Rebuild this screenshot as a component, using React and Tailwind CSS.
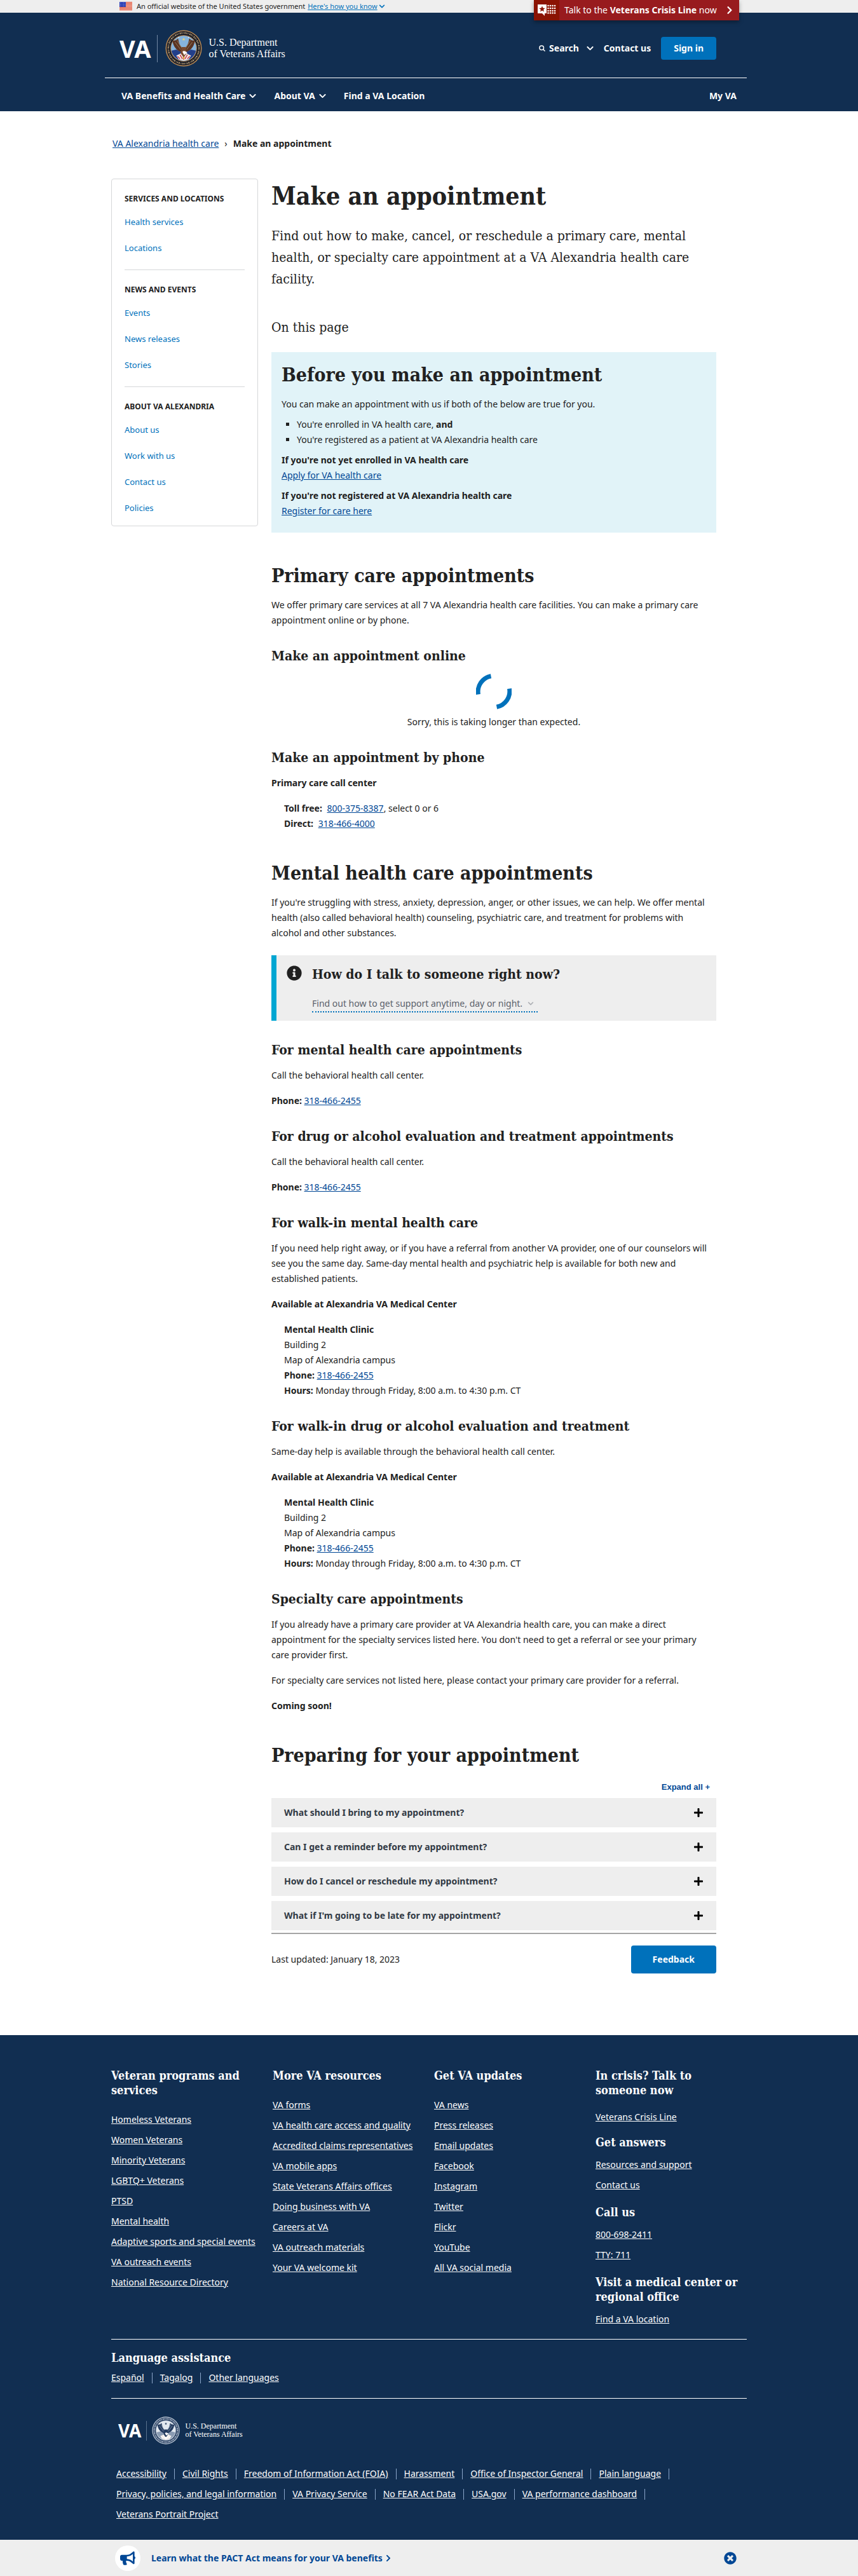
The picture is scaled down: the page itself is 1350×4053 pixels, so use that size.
import React from "react";
import {
  FaBullhorn,
  FaChevronDown,
  FaChevronRight,
  FaInfoCircle,
  FaPlus,
  FaTimesCircle,
} from "react-icons/fa";

const serif = "font-['DejaVu_Serif_Condensed','DejaVu_Serif',serif]";

const sideNav = [
  { title: "Services and locations", links: ["Health services", "Locations"] },
  { title: "News and events", links: ["Events", "News releases", "Stories"] },
  { title: "About VA Alexandria", links: ["About us", "Work with us", "Contact us", "Policies"] },
];

const questions = [
  "What should I bring to my appointment?",
  "Can I get a reminder before my appointment?",
  "How do I cancel or reschedule my appointment?",
  "What if I'm going to be late for my appointment?",
];

const footerColumns = [
  {
    title: "Veteran programs and services",
    links: [
      "Homeless Veterans",
      "Women Veterans",
      "Minority Veterans",
      "LGBTQ+ Veterans",
      "PTSD",
      "Mental health",
      "Adaptive sports and special events",
      "VA outreach events",
      "National Resource Directory",
    ],
  },
  {
    title: "More VA resources",
    links: [
      "VA forms",
      "VA health care access and quality",
      "Accredited claims representatives",
      "VA mobile apps",
      "State Veterans Affairs offices",
      "Doing business with VA",
      "Careers at VA",
      "VA outreach materials",
      "Your VA welcome kit",
    ],
  },
  {
    title: "Get VA updates",
    links: [
      "VA news",
      "Press releases",
      "Email updates",
      "Facebook",
      "Instagram",
      "Twitter",
      "Flickr",
      "YouTube",
      "All VA social media",
    ],
  },
];

const legalLinks = [
  "Accessibility",
  "Civil Rights",
  "Freedom of Information Act (FOIA)",
  "Harassment",
  "Office of Inspector General",
  "Plain language",
  "Privacy, policies, and legal information",
  "VA Privacy Service",
  "No FEAR Act Data",
  "USA.gov",
  "VA performance dashboard",
  "Veterans Portrait Project",
];

function Flag() {
  return (
    <svg viewBox="0 0 20 14" className="h-3.5 w-5" aria-hidden="true">
      <rect width="20" height="14" fill="#fff" />
      {[0, 2, 4, 6, 8, 10, 12].map((y) => (
        <rect key={y} y={y} width="20" height="1.2" fill="#db3e1f" />
      ))}
      <rect width="10" height="8" fill="#1e33b1" />
      {[1.5, 4, 6.5].map((y) =>
        [1.5, 4, 6.5, 8.8].map((x) => <circle key={x + "-" + y} cx={x} cy={y} r="0.5" fill="#fff" />)
      )}
    </svg>
  );
}

function Seal({ mono, className }) {
  const c = mono
    ? { rim: "#c3cedb", ring: "#33496a", marks: "#c3cedb", sky: "#e3e9f0", wing: "#243b5e", body: "#243b5e", low: "#8a9bb2", head: "#fff", stripe: "#fff", edge: "#c3cedb" }
    : { rim: "#b98a55", ring: "#1a1c26", marks: "#b39a72", sky: "#86b4dc", wing: "#5a3423", body: "#7a4a2e", low: "#233f8a", head: "#fff", stripe: "#c8364a", edge: "#b98a55" };
  return (
    <svg viewBox="0 0 60 60" className={className} aria-hidden="true">
      <circle cx="30" cy="30" r="29.5" fill={c.rim} />
      <circle cx="30" cy="30" r="28" fill={c.ring} />
      <circle cx="30" cy="30" r="25" fill="none" stroke={c.marks} strokeWidth="2.6" strokeDasharray="1.4 1.2 0.8 1.6 2 1.1" />
      <circle cx="30" cy="30" r="21.5" fill={c.edge} />
      <circle cx="30" cy="30" r="20.5" fill={c.sky} />
      <path d="M10 34 A20.5 20.5 0 0 0 50 34 L42 32 L30 38 L18 32 Z" fill={c.low} />
      <path d="M18 42 L30 36 L42 42 L38 48 L30 50.5 L22 48 Z" fill="#f1ece8" />
      <path d="M20 43l4 4M24 40.500l4 7M36 40.500l-4 7M40 43l-4 4M30 40v9" stroke={c.stripe} strokeWidth="1.500" />
      <path d="M12 18 C13 27 18 33 26 36 L29 30 C24 27 22 21 21 14 C17 18 15 17 12 18 Z" fill={c.wing} />
      <path d="M48 18 C47 27 42 33 34 36 L31 30 C36 27 38 21 39 14 C43 18 45 17 48 18 Z" fill={c.wing} />
      <path d="M16 20l9 12M19 17l8 13M44 20l-9 12M41 17l-8 13" stroke={c.marks} strokeWidth="0.700" />
      <path d="M27 28 L33 28 L35 38 L30 45 L25 38 Z" fill={c.body} />
      <path d="M28 36 C30 33 34 35 36 38 L33 39 L31 41 Z" fill={c.head} />
      <path d="M28 44l2 5 2-5z" fill={mono ? "#fff" : "#e0a63a"} />
      <path d="M30 12.500l.7 2 2 .1-1.600 1.200.6 2-1.700-1.200-1.700 1.200.6-2-1.600-1.200 2-.1z" fill={mono ? c.wing : "#e6d27a"} />
      <circle cx="22" cy="12.500" r="0.800" fill={c.head} />
      <circle cx="38" cy="12.500" r="0.800" fill={c.head} />
    </svg>
  );
}

function Chevron() {
  return <FaChevronDown className="h-3 w-[11px]" aria-hidden="true" />;
}

function Link({ children, className = "" }) {
  return (
    <a href="#" className={"text-[#004795] underline " + className}>
      {children}
    </a>
  );
}

function H2({ children, className = "mt-[46px]" }) {
  return <h2 className={serif + " mb-3.5 text-[30px] leading-10 font-bold " + className}>{children}</h2>;
}

function H3({ children, className = "mt-[30px]" }) {
  return <h3 className={serif + " mb-3.5 text-[21px] leading-7 font-bold " + className}>{children}</h3>;
}

function Phone() {
  return (
    <p>
      <b>Phone:</b> <Link>318-466-2455</Link>
    </p>
  );
}

function Clinic() {
  return (
    <div className="mt-4 pl-5">
      <p className="font-bold">Mental Health Clinic</p>
      <p>Building 2</p>
      <p>Map of Alexandria campus</p>
      <Phone />
      <p>
        <b>Hours:</b> Monday through Friday, 8:00 a.m. to 4:30 p.m. CT
      </p>
    </div>
  );
}

function TopBar() {
  return (
    <div className="bg-[#eeeeee]">
      <div className="relative mx-auto flex h-5 max-w-[1000px] items-center pl-[13px] text-[11px]">
        <Flag />
        <span className="ml-[7px]">An official website of the United States government</span>
        <button type="button" className="ml-1 flex items-center text-[#0071bb] underline">
          Here's how you know
          <FaChevronDown className="ml-0.5 h-2.5 w-2.5" aria-hidden="true" />
        </button>
        <a
          href="#"
          className="absolute top-0 right-3 flex h-8 w-[323px] items-center bg-[#981b1e] text-[14px] text-white shadow-[0_3px_6px_rgba(0,0,0,0.35)]"
        >
          <span className="flex h-8 w-10 items-center justify-center bg-[#8b1303]">
            <svg viewBox="0 0 29 19" className="h-[19px] w-[29px]" aria-hidden="true">
              <path d="M0 0h14v14h-3v4l-4-4H0z" fill="#fff" />
              <path d="M7 2.500l1.300 3.100 3.400.3-2.600 2.200.8 3.300L7 9.600l-2.900 1.800.8-3.300L2.300 5.900l3.400-.3z" fill="#8b1303" />
              {[2, 6, 10, 13.5].map((y) =>
                [16.5, 20, 23.5, 27].map((x) => <circle key={x + "-" + y} cx={x} cy={y} r="1.300" fill="#fff" />)
              )}
            </svg>
          </span>
          <span className="ml-2">
            Talk to the <b>Veterans Crisis Line</b> now
          </span>
          <FaChevronRight className="mr-2.5 ml-auto h-3.5 w-2.5" aria-hidden="true" />
        </a>
      </div>
    </div>
  );
}

function Header() {
  return (
    <header className="bg-[#112e51] text-[14px] font-bold text-white">
      <div className="mx-auto w-full max-w-[1020px] pr-2.5">
        <div className="flex h-[103px] items-center border-b border-white pt-2.5 pr-12 pl-[23px]">
          <a href="#" className="flex items-center" aria-label="VA, U.S. Department of Veterans Affairs">
            <span className="font-['Noto_Sans',sans-serif] text-[38px] leading-10 font-bold">VA</span>
            <span className="ml-2.5 h-[43px] w-px bg-[#7288a3]" />
            <Seal className="ml-3 h-[58px] w-[58px]" />
            <span className="ml-2.5 font-['Liberation_Serif',serif] text-[16px] leading-[18px] font-normal">
              U.S. Department
              <br />
              of Veterans Affairs
            </span>
          </a>
          <div className="ml-auto flex items-center">
            <button type="button" className="flex items-center">
              <svg viewBox="0 0 10 10" className="mr-1.5 h-2.5 w-2.5" fill="none" stroke="currentColor" strokeWidth="1.500" aria-hidden="true">
                <circle cx="4.200" cy="4.200" r="3.300" />
                <path d="M6.700 6.700l2.800 2.800" />
              </svg>
              <span className="mr-3">Search</span>
              <Chevron />
            </button>
            <a href="#" className="ml-4">Contact us</a>
            <button type="button" className="ml-4 h-9 rounded bg-[#0071bb] px-5">Sign in</button>
          </div>
        </div>
        <nav className="flex h-[52px] items-center gap-7 pt-1 pr-4 pl-[26px]" aria-label="Main">
          <button type="button" className="flex items-center gap-1.5">
            VA Benefits and Health Care <Chevron />
          </button>
          <button type="button" className="flex items-center gap-1.5">
            About VA <Chevron />
          </button>
          <a href="#">Find a VA Location</a>
          <a href="#" className="ml-auto">My VA</a>
        </nav>
      </div>
    </header>
  );
}

function SideNav() {
  return (
    <nav
      aria-label="VA Alexandria health care"
      className="w-[231px] shrink-0 self-start rounded border border-[#d6d7d9] px-5 pt-[19px] pb-2 text-[13px]"
    >
      {sideNav.map((group, i) => (
        <section key={group.title} className={i ? "mt-3.5 border-t border-[#d6d7d9] pt-[19px]" : ""}>
          <h2 className="text-[12px] leading-6 font-bold uppercase">{group.title}</h2>
          <ul className="mt-[3px]">
            {group.links.map((l) => (
              <li key={l} className="flex h-[41px] items-center">
                <a href="#" className="text-[#0071bb]">{l}</a>
              </li>
            ))}
          </ul>
        </section>
      ))}
    </nav>
  );
}

function FooterHeading({ children, className = "" }) {
  return <h2 className={serif + " text-[18px] leading-[23px] font-bold " + className}>{children}</h2>;
}

function FooterList({ links, className = "" }) {
  return (
    <ul className={className}>
      {links.map((l) => (
        <li key={l} className="leading-8 whitespace-nowrap">
          <a href="#" className="underline">{l}</a>
        </li>
      ))}
    </ul>
  );
}

function Divider() {
  return <span className="mx-3 h-[17px] w-px bg-[#8ba6ca]" aria-hidden="true" />;
}

function Footer() {
  const languages = ["Español", "Tagalog", "Other languages"];
  return (
    <footer className="bg-[#112e51] pt-[52px] pb-6 text-white">
      <div className="mx-auto max-w-[1000px]">
        <div className="grid grid-cols-[254px_254px_254px_1fr]">
          {footerColumns.map((col) => (
            <section key={col.title} className="pr-4">
              <FooterHeading>{col.title}</FooterHeading>
              <FooterList links={col.links} className="mt-[19px]" />
            </section>
          ))}
          <section>
            <FooterHeading className="pr-6">In crisis? Talk to someone now</FooterHeading>
            <FooterList links={["Veterans Crisis Line"]} className="mt-[15px]" />
            <FooterHeading className="mt-3">Get answers</FooterHeading>
            <FooterList links={["Resources and support", "Contact us"]} className="mt-2" />
            <FooterHeading className="mt-[15px]">Call us</FooterHeading>
            <FooterList links={["800-698-2411", "TTY: 711"]} className="mt-2" />
            <FooterHeading className="mt-[15px]">Visit a medical center or regional office</FooterHeading>
            <FooterList links={["Find a VA location"]} className="mt-2" />
          </section>
        </div>
        <section className="mt-[15px] border-y border-white pt-[17px] pb-5">
          <FooterHeading>Language assistance</FooterHeading>
          <div className="mt-2 flex items-center">
            {languages.map((l, i) => (
              <React.Fragment key={l}>
                {i > 0 && <Divider />}
                <a href="#" className="underline">{l}</a>
              </React.Fragment>
            ))}
          </div>
        </section>
        <a href="#" className="mt-[27px] flex h-[46px] items-center pl-[11px]" aria-label="VA, U.S. Department of Veterans Affairs">
          <span className="text-[28px] leading-8 font-bold">VA</span>
          <span className="ml-2 h-[31px] w-px bg-[#5b7390]" />
          <Seal mono className="ml-2 h-[44px] w-[44px]" />
          <span className="ml-2 font-['Liberation_Serif',serif] text-[12px] leading-[13px]">
            U.S. Department
            <br />
            of Veterans Affairs
          </span>
        </a>
        <ul className="mt-[29px] flex flex-wrap px-2">
          {legalLinks.map((l, i) => (
            <li key={l} className="flex h-8 items-center">
              <a href="#" className="underline">{l}</a>
              {i < legalLinks.length - 1 && <Divider />}
            </li>
          ))}
        </ul>
      </div>
    </footer>
  );
}

export default function App() {
  return (
    <div className="bg-white font-['Noto_Sans',sans-serif] text-[14px] leading-6 text-[#212121]">
      <TopBar />
      <Header />
      <div className="mx-auto max-w-[1000px]">
        <nav aria-label="Breadcrumb" className="flex items-center pt-[39px] pl-[2px] text-[14px]">
          <Link>VA Alexandria health care</Link>
          <span className="mx-[9px]">›</span>
          <b>Make an appointment</b>
        </nav>
        <div className="mt-[43px] flex items-start">
          <SideNav />
          <main className="mr-12 ml-[21px] min-w-0 flex-1 pt-px">
            <h1 className={serif + " text-[39px] leading-[52px] font-bold"}>Make an appointment</h1>
            <p className={serif + " mt-5 text-[21px] leading-[34px]"}>
              Find out how to make, cancel, or reschedule a primary care, mental health, or specialty care
              appointment at a VA Alexandria health care facility.
            </p>
            <p className={serif + " mt-[42px] text-[21px] leading-[34px]"}>On this page</p>

            <section className="mt-[22px] bg-[#e1f3f8] px-4 pt-4 pb-[22px]">
              <H2 className="">Before you make an appointment</H2>
              <p>You can make an appointment with us if both of the below are true for you.</p>
              <ul className="my-2 list-[square] pl-6">
                <li>
                  You're enrolled in VA health care, <b>and</b>
                </li>
                <li>You're registered as a patient at VA Alexandria health care</li>
              </ul>
              <p className="font-bold">If you're not yet enrolled in VA health care</p>
              <p>
                <Link>Apply for VA health care</Link>
              </p>
              <p className="mt-2 font-bold">If you're not registered at VA Alexandria health care</p>
              <p>
                <Link>Register for care here</Link>
              </p>
            </section>

            <H2 className="mt-12">Primary care appointments</H2>
            <p>
              We offer primary care services at all 7 VA Alexandria health care facilities. You can make a primary
              care appointment online or by phone.
            </p>
            <H3>Make an appointment online</H3>
            <div className="flex flex-col items-center gap-2" role="status">
              <svg viewBox="0 0 56 56" className="h-14 w-14" fill="none" stroke="#0071bb" strokeWidth="7" aria-hidden="true">
                <path d="M3.500 32.500 A25 25 0 0 1 23.500 3.700" />
                <path d="M52.500 23.500 A25 25 0 0 1 32.500 52.300" />
              </svg>
              <p>Sorry, this is taking longer than expected.</p>
            </div>
            <H3>Make an appointment by phone</H3>
            <p className="font-bold">Primary care call center</p>
            <div className="mt-4 pl-5">
              <p>
                <b className="mr-1">Toll free:</b> <Link>800-375-8387</Link>, select 0 or 6
              </p>
              <p>
                <b className="mr-1">Direct:</b> <Link>318-466-4000</Link>
              </p>
            </div>

            <H2>Mental health care appointments</H2>
            <p className="pr-2">
              If you're struggling with stress, anxiety, depression, anger, or other issues, we can help. We offer
              mental health (also called behavioral health) counseling, psychiatric care, and treatment for problems
              with alcohol and other substances.
            </p>
            <section className="mt-[23px] flex border-l-8 border-[#00a6d2] bg-[#eeeeee] pt-4 pb-[13px] pl-4">
              <FaInfoCircle className="h-6 w-6 shrink-0" aria-hidden="true" />
              <div className="ml-4">
                <H3 className="">How do I talk to someone right now?</H3>
                <button
                  type="button"
                  className="flex items-center border-b-2 border-dotted border-[#0071bb] pt-1.5 text-[#5b616b]"
                >
                  Find out how to get support anytime, day or night.
                  <FaChevronDown className="mr-1.5 ml-2 h-2.5 w-2.5 text-[#aeb0b5]" aria-hidden="true" />
                </button>
              </div>
            </section>

            <H3 className="mt-8">For mental health care appointments</H3>
            <p className="mb-4">Call the behavioral health call center.</p>
            <Phone />
            <H3>For drug or alcohol evaluation and treatment appointments</H3>
            <p className="mb-4">Call the behavioral health call center.</p>
            <Phone />
            <H3>For walk-in mental health care</H3>
            <p>
              If you need help right away, or if you have a referral from another VA provider, one of our counselors
              will see you the same day. Same-day mental health and psychiatric help is available for both new and
              established patients.
            </p>
            <p className="mt-4 font-bold">Available at Alexandria VA Medical Center</p>
            <Clinic />
            <H3>For walk-in drug or alcohol evaluation and treatment</H3>
            <p>Same-day help is available through the behavioral health call center.</p>
            <p className="mt-4 font-bold">Available at Alexandria VA Medical Center</p>
            <Clinic />
            <H3>Specialty care appointments</H3>
            <p>
              If you already have a primary care provider at VA Alexandria health care, you can make a direct
              appointment for the specialty services listed here. You don't need to get a referral or see your
              primary care provider first.
            </p>
            <p className="mt-4">
              For specialty care services not listed here, please contact your primary care provider for a referral.
            </p>
            <p className="mt-4 font-bold">Coming soon!</p>

            <H2>Preparing for your appointment</H2>
            <div className="flex justify-end pr-2.5">
              <button type="button" className="mt-1 mb-[5px] font-['Liberation_Sans',sans-serif] text-[13px] font-bold text-[#004795]">
                Expand all +
              </button>
            </div>
            <ul className="flex flex-col gap-2">
              {questions.map((q) => (
                <li key={q}>
                  <button
                    type="button"
                    className="flex h-[46px] w-full items-center justify-between bg-[#eeeeee] pr-5 pl-5 text-left font-bold text-[#323a45]"
                  >
                    {q}
                    <FaPlus className="h-4 w-4 text-black" aria-hidden="true" />
                  </button>
                </li>
              ))}
            </ul>
            <div className="mt-1 flex items-center justify-between border-t-2 border-[#a6a6a6] pt-[18px]">
              <p>Last updated: January 18, 2023</p>
              <button type="button" className="h-11 rounded bg-[#0071bb] px-[34px] font-bold text-white">
                Feedback
              </button>
            </div>
          </main>
        </div>
      </div>
      <div className="h-[97px]" />
      <Footer />
      <aside className="bg-[#eeeeee]" aria-label="Announcement">
        <div className="mx-auto flex h-[58px] max-w-[1000px] items-center pr-4 pl-1.5">
          <span className="flex h-10 w-10 items-center justify-center rounded-full bg-white text-[#004795]">
            <FaBullhorn className="h-6 w-6" aria-hidden="true" />
          </span>
          <a href="#" className="ml-[17px] flex items-center gap-1 font-bold text-[#004795]">
            Learn what the PACT Act means for your VA benefits
            <FaChevronRight className="h-3 w-2.5" aria-hidden="true" />
          </a>
          <button type="button" aria-label="Dismiss announcement" className="ml-auto text-[#004795]">
            <FaTimesCircle className="h-5 w-5" aria-hidden="true" />
          </button>
        </div>
      </aside>
    </div>
  );
}
